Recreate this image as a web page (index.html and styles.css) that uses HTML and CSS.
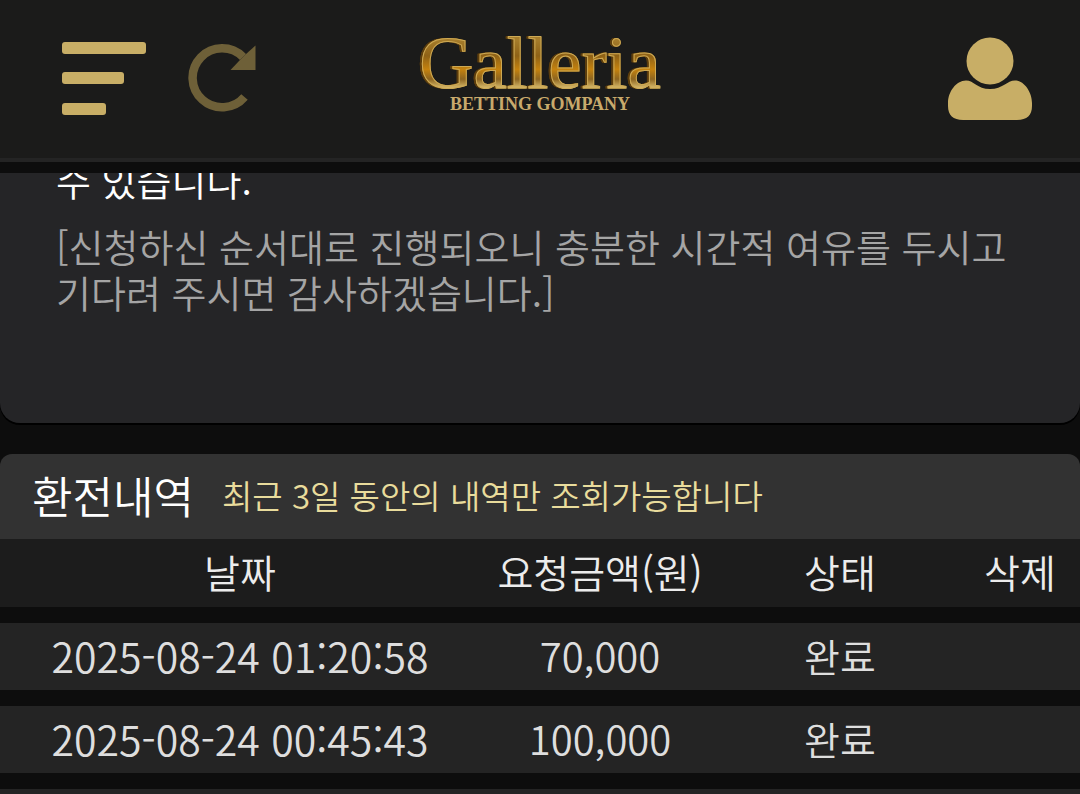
FILE: index.html
```html
<!DOCTYPE html>
<html lang="ko">
<head>
<meta charset="utf-8">
<meta name="viewport" content="width=device-width, initial-scale=1">
<title>Galleria</title>
<link rel="stylesheet" href="styles.css">
</head>
<body>
<header class="topbar">
  <div class="actions">
    <button class="icon-button" type="button" aria-label="메뉴">
      <svg width="86" height="76" viewBox="0 0 86 76" fill="#c8ae66"><rect x="1" y="1" width="84" height="12" rx="3"/><rect x="1" y="31" width="62" height="12" rx="3"/><rect x="1" y="62" width="44" height="12" rx="3"/></svg>
    </button>
    <button class="icon-button" type="button" aria-label="새로고침">
      <svg width="70" height="70" viewBox="0 1.500 70 70"><path d="M57.500 54.500A29.500 29.500 0 1 1 56 14.500" fill="none" stroke="#6e6038" stroke-width="8.500"/><path d="M68.500 3V27.500H43.500L52.500 18L58.500 12Z" fill="#6e6038"/></svg>
    </button>
  </div>
  <a class="brand" href="#">
    <span class="brand-name">Galleria</span>
    <span class="brand-tag">BETTING GOMPANY</span>
  </a>
  <div class="account">
    <button class="icon-button" type="button" aria-label="내 정보">
      <svg width="84" height="84" viewBox="0 0 84 84" fill="#c8ae66"><circle cx="42" cy="24" r="23.500"/><path d="M0 66C0 55 8 43.500 18 43.500C26 43.500 29 52 42 52C55 52 59 43.500 67 43.500C76 43.500 84 55 84 66V69C84 78 79 83 69 83H15C5 83 0 78 0 69Z"/></svg>
    </button>
  </div>
</header>
<main class="content">
  <section class="notice">
    <p class="notice-lead">수 있습니다.</p>
    <p class="notice-note">[신청하신 순서대로 진행되오니 충분한 시간적 여유를 두시고 기다려 주시면 감사하겠습니다.]</p>
  </section>
  <section class="history">
    <div class="history-head">
      <h2 class="history-title">환전내역</h2>
      <p class="history-hint">최근 3일 동안의 내역만 조회가능합니다</p>
    </div>
    <table class="history-table">
      <colgroup><col class="col-date"><col class="col-amount"><col class="col-state"><col class="col-delete"></colgroup>
      <thead><tr><th scope="col">날짜</th><th scope="col">요청금액(원)</th><th scope="col">상태</th><th scope="col">삭제</th></tr></thead>
      <tbody>
        <tr><td class="date">2025-08-24 01:20:58</td><td class="amount">70,000</td><td>완료</td><td></td></tr>
        <tr><td class="date">2025-08-24 00:45:43</td><td class="amount">100,000</td><td>완료</td><td></td></tr>
        <tr><td></td><td></td><td></td><td></td></tr>
      </tbody>
    </table>
  </section>
</main>
</body>
</html>
```
FILE: styles.css
```css
* { box-sizing: border-box; }
body {
  margin: 0;
  height: 100vh;
  display: flex;
  flex-direction: column;
  overflow: hidden;
  background: #0d0d0d;
  color: #fff;
  font-family: "Noto Sans CJK KR", sans-serif;
  font-weight: 350;
}
h2, p { margin: 0; font-weight: 350; }
.topbar {
  flex: none;
  display: grid;
  grid-template-columns: 1fr auto 1fr;
  align-items: center;
  padding: 37px 48px 37px 61px;
  background: #1b1b1a;
  border-bottom: 4px solid #242424;
}
.actions { display: flex; align-items: center; gap: 40px; }
.account { display: flex; justify-content: flex-end; }
.icon-button {
  display: block;
  padding: 0;
  border: 0;
  background: none;
  cursor: pointer;
}
.icon-button svg { display: block; }
.brand {
  align-self: start;
  display: flex;
  flex-direction: column;
  align-items: center;
  gap: 3px;
  margin-right: 13px;
  color: #c9aa6c;
  text-decoration: none;
  font-family: "Liberation Serif", serif;
}
.brand-name {
  padding: 0 4px 2px;
  font-size: 75px;
  font-weight: 400;
  line-height: 52px;
  color: transparent;
  background: linear-gradient(#a67d2c 5%, #8f6216 35%, #c4820f 60%, #8d6520 78%, #e0c474 96%);
  -webkit-background-clip: text;
  background-clip: text;
  -webkit-text-stroke: 1px #cda954;
  filter: drop-shadow(-2px 0 0 #5c3d0c);
}
.brand-tag { font-size: 18px; line-height: 20px; font-weight: 700; }
.content { flex: 1; min-height: 0; padding-top: 11px; overflow: hidden; }
.notice {
  overflow: hidden;
  padding: 0 56px 108px;
  background: #252527;
  border-radius: 0 0 20px 20px;
  box-shadow: 0 2px 0 #000;
  font-size: 38px;
  line-height: 46px;
  word-break: keep-all;
}
.notice-lead { margin: -16px 0 20px; }
.notice-note { color: #a5a5a5; }
.history { margin-top: 31px; }
.history-head {
  display: flex;
  align-items: center;
  gap: 28px;
  padding: 9px 32px 12px;
  background: #323232;
  border-radius: 12px 12px 0 0;
}
.history-title { font-size: 44px; line-height: 64px; }
.history-hint { font-size: 33px; line-height: 48px; color: #e9dc9c; }
.history-table {
  width: 100%;
  table-layout: fixed;
  border-collapse: collapse;
  font-size: 39px;
  line-height: 48px;
}
.col-date { width: calc(100% * 4 / 9); }
.col-amount, .col-state { width: calc(100% * 2 / 9); }
.col-delete { width: calc(100% / 9); }
.history-table th, .history-table td {
  height: 83px;
  padding: 6px 0 10px;
  border-bottom: 16px solid #0d0d0d;
  text-align: center;
  font-weight: 350;
  white-space: nowrap;
}
.history-table th { height: 76px; background: #1c1c1c; color: #ececec; }
.history-table td { background: #242424; color: #dedede; }
.history-table .date { font-size: 41px; }
.history-table .amount { font-size: 40px; }
```
